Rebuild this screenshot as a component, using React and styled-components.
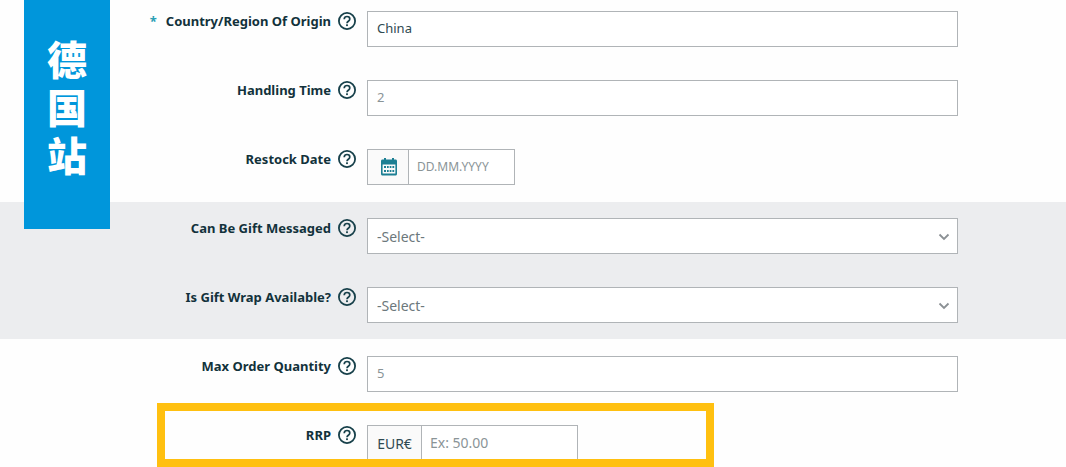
import React from 'react';
import styled, { createGlobalStyle } from 'styled-components';

function HelpIcon() {
  return (
    <svg width="20" height="20" viewBox="0 0 20 20" fill="none" aria-hidden="true">
      <circle cx="10" cy="10" r="8.1" stroke="#17404a" strokeWidth="1.8" />
      <path
        d="M7.2 8.2c0-1.700 1.200-2.700 2.800-2.700s2.800 1 2.800 2.400c0 1.100-.6 1.700-1.400 2.300-.8.600-1.400 1-1.400 2"
        stroke="#17404a"
        strokeWidth="1.7"
      />
      <rect x="9.1" y="13.3" width="1.8" height="1.8" fill="#17404a" />
    </svg>
  )
}

function CalendarIcon() {
  return (
    <svg width="18" height="20" viewBox="0 0 18 20" aria-hidden="true">
      <path
        fill="#1c7f93"
        d="M4 1h2v1.500h6V1h2v1.500h1.500c.9 0 1.500.6 1.500 1.500v13c0 .9-.6 1.500-1.500 1.500h-13C1.600 18.500 1 17.900 1 17V4c0-.9.6-1.500 1.500-1.500H4z"
      />
      <path fill="#fafafa" d="M2.600 7.500h12.800v9H2.600z" />
      <path
        fill="#1c7f93"
        d="M4 9h2v2H4zM7 9h1.700v2H7zM9.700 9h1.700v2H9.700zM12.400 9h1.800v2h-1.800zM4 13h2v2H4zM7 13h1.700v2H7zM9.700 13h1.700v2H9.700zM12.400 13h1.800v2h-1.800z"
      />
    </svg>
  )
}

function Field({ id, label, required, children }) {
  return (
    <Row>
      <LabelCell>
        {required && <Star>*</Star>}
        <Label htmlFor={id}>{label}</Label>
        <HelpButton type="button" aria-label={`Help: ${label}`}>
          <HelpIcon />
        </HelpButton>
      </LabelCell>
      {children}
    </Row>
  )
}

function SelectField({ id, label }) {
  return (
    <Field id={id} label={label}>
      <SelectBox>
        <Select id={id} defaultValue="">
          <option value="">-Select-</option>
          <option value="yes">Yes</option>
          <option value="no">No</option>
        </Select>
        <Chevron width="12" height="8" viewBox="0 0 12 8" fill="none" aria-hidden="true">
          <path d="M1.500 1.500 6 6l4.500-4.500" stroke="#8b9094" strokeWidth="1.800" />
        </Chevron>
      </SelectBox>
    </Field>
  )
}

function App() {
  return (
    <Page>
      <GlobalStyle />
      <Banner lang="zh-CN">
        <span>德</span>
        <span>国</span>
        <span>站</span>
      </Banner>
      <form>
        <Section $top={11} $bottom={17}>
          <Field id="origin" label="Country/Region Of Origin" required>
            <Input id="origin" defaultValue="China" />
          </Field>
          <Field id="handling" label="Handling Time">
            <Input id="handling" placeholder="2" />
          </Field>
          <Field id="restock" label="Restock Date">
            <Group $width={148}>
              <DateButton type="button" aria-label="Open calendar">
                <CalendarIcon />
              </DateButton>
              <GroupInput id="restock" placeholder="DD.MM.YYYY" $small />
            </Group>
          </Field>
        </Section>
        <Section $top={16} $bottom={16} $shaded>
          <SelectField id="message" label="Can Be Gift Messaged" />
          <SelectField id="wrap" label="Is Gift Wrap Available?" />
        </Section>
        <Section $top={17} $bottom={6}>
          <Field id="quantity" label="Max Order Quantity">
            <Input id="quantity" placeholder="5" />
          </Field>
          <Marked>
            <Field id="rrp" label="RRP">
              <Group $width={211}>
                <Currency>EUR€</Currency>
                <GroupInput id="rrp" placeholder="Ex: 50.00" />
              </Group>
            </Field>
            <Highlight />
          </Marked>
        </Section>
      </form>
    </Page>
  )
}

const GlobalStyle = createGlobalStyle`
  * {
    box-sizing: border-box;
  }
  body {
    margin: 0;
    background-color: #fefefe;
  }
  body, input, select, button {
    font-family: 'Noto Sans', 'Open Sans', sans-serif;
    font-size: 13px;
    color: #2f4a52;
  }
`

const Page = styled.main`
  position: relative;
`

const Banner = styled.div`
  position: absolute;
  z-index: 1;
  top: 0;
  left: 24px;
  width: 86px;
  padding: 40px 0 53px;
  display: flex;
  gap: 8px;
  writing-mode: vertical-rl;
  background-color: #0096db;
  color: white;
  font-family: 'Noto Sans CJK SC', sans-serif;
  font-size: 40px;
  font-weight: 900;
  line-height: 86px;
`

const Section = styled.section`
  display: flex;
  flex-direction: column;
  gap: 33px;
  padding: ${props => props.$top}px 108px ${props => props.$bottom}px 0;
  background-color: ${props => props.$shaded ? '#ecedef' : 'transparent'};
`

const Row = styled.div`
  display: grid;
  grid-template-columns: 357px 1fr;
  column-gap: 10px;
  align-items: start;
`

const LabelCell = styled.div`
  display: flex;
  justify-content: flex-end;
  align-items: center;
`

const Label = styled.label`
  color: #12323b;
  font-weight: bold;
  line-height: 20px;
`

const Star = styled.span`
  margin-right: 9px;
  color: #2a9fb5;
  font-weight: bold;
  line-height: 20px;
`

const HelpButton = styled.button`
  display: flex;
  margin-left: 6px;
  padding: 0;
  border: none;
  background: none;
`

const Input = styled.input`
  width: 100%;
  height: 36px;
  padding: 0 9px 2px;
  border: 1px solid #b0b4b7;
  border-radius: 0;
  background-color: white;
  outline: none;
  &::placeholder {
    color: #8a9497;
    opacity: 1;
  }
`

const SelectBox = styled.div`
  position: relative;
`

const Select = styled.select`
  display: block;
  width: 100%;
  height: 36px;
  padding: 0 9px;
  border: 1px solid #b0b4b7;
  border-radius: 0;
  background-color: white;
  color: #6c787c;
  font-size: 14px;
  appearance: none;
`

const Chevron = styled.svg`
  position: absolute;
  right: 8px;
  top: 15px;
  pointer-events: none;
`

const Group = styled.div`
  display: flex;
  width: ${props => props.$width}px;
  height: 36px;
  border: 1px solid #b0b4b7;
  background-color: #fafafa;
`

const GroupInput = styled(Input)`
  flex: 1;
  min-width: 0;
  height: 100%;
  border-width: 0 0 0 1px;
  padding: 0 8px 2px;
  font-size: ${props => props.$small ? 12 : 14}px;
`

const DateButton = styled.button`
  display: flex;
  align-items: center;
  justify-content: center;
  width: 40px;
  padding: 0 0 0 2px;
  border: none;
  background: none;
`

const Currency = styled.span`
  display: flex;
  align-items: center;
  justify-content: center;
  width: 53px;
  font-size: 14px;
`

const Marked = styled.div`
  position: relative;
`

// frame drawn over the RRP row, reaching a little past its input
const Highlight = styled.div`
  position: absolute;
  top: -22px;
  bottom: -6px;
  left: 157px;
  width: 557px;
  border: 8px solid #ffc010;
  pointer-events: none;
`

export default App;
